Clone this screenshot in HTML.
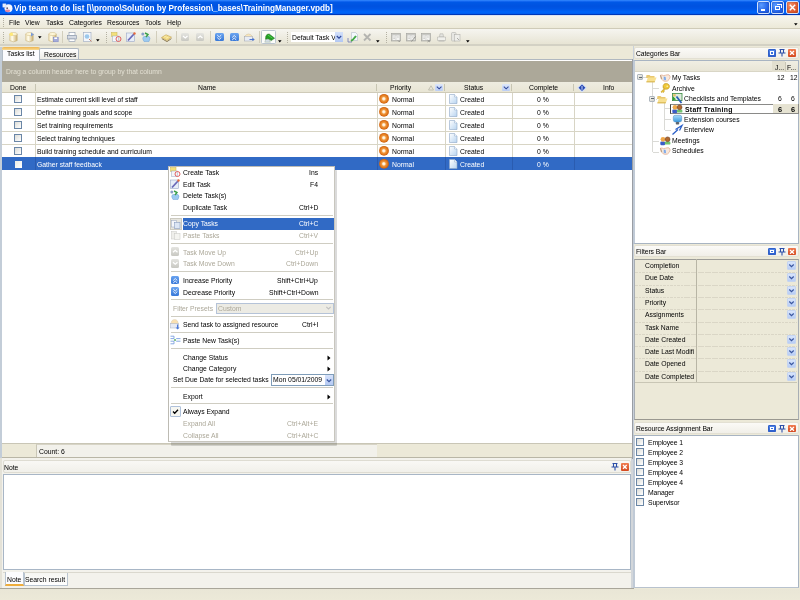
<!DOCTYPE html><html><head><meta charset="utf-8"><style>
*{box-sizing:border-box;margin:0;padding:0}
html,body{width:800px;height:600px;overflow:hidden;background:#ECE9D8;font-family:"Liberation Sans",sans-serif;font-size:6.8px;color:#000}
.a{position:absolute}
.t{position:absolute;will-change:transform;white-space:nowrap;line-height:8px;height:8px}
.g{color:#ACA899}
svg{position:absolute;overflow:visible}
</style></head><body><div class="a" style="left:0px;top:0px;width:800px;height:15px;background:linear-gradient(#3A90FF 0px,#1A6CF4 1px,#0058E6 2.5px,#0052E0 6px,#0056E6 9px,#0066FA 12px,#005EF0 13.5px,#0038B8 14.5px,#0038B8 15px)"></div>
<div class="t" style="left:13.5px;top:5.5px;color:#fff;font-weight:bold;font-size:8.2px;top:3.5px;line-height:10px;height:10px">Vip team to do list [\\promo\Solution by Profession\_bases\TrainingManager.vpdb]</div>
<div class="a" style="left:0px;top:15px;width:800px;height:14px;background:linear-gradient(#F7F6F0,#ECE9D8);border-bottom:1px solid #CFCBB8"></div>
<div class="a" style="left:0px;top:15px;width:800px;height:1px;background:#DCE4F2"></div>
<div class="t" style="left:9px;top:19px;">File</div>
<div class="t" style="left:25px;top:19px;">View</div>
<div class="t" style="left:46px;top:19px;">Tasks</div>
<div class="t" style="left:69px;top:19px;">Categories</div>
<div class="t" style="left:107px;top:19px;">Resources</div>
<div class="t" style="left:145px;top:19px;">Tools</div>
<div class="t" style="left:167px;top:19px;">Help</div>
<div class="a" style="left:0px;top:29px;width:800px;height:15.5px;background:linear-gradient(#F6F5F0,#E6E3D2)"></div>
<div class="a" style="left:0px;top:44.2px;width:800px;height:2.3px;background:#D3D1C4"></div>
<div class="a" style="left:0px;top:59px;width:634px;height:400px;background:#fff;border:1px solid #A5ACB5;border-top:none"></div>
<div class="a" style="left:39px;top:59px;width:594px;height:1px;background:#B0B8C0"></div>
<div class="a" style="left:1px;top:60px;width:632px;height:1.5px;background:#FFFFFF"></div>
<div class="a" style="left:2px;top:47px;width:37.5px;height:13.5px;background:#FCFCFE;border:1px solid #B5BEC8;border-bottom:none;border-top:none;border-radius:2px 2px 0 0"></div>
<div class="a" style="left:2px;top:47px;width:37.5px;height:2.5px;background:linear-gradient(#EDB450,#FADB90);border-radius:2px 2px 0 0"></div>
<div class="t" style="left:7px;top:50px;">Tasks list</div>
<div class="a" style="left:39.2px;top:48.3px;width:40.2px;height:11px;background:linear-gradient(#FFFFFF,#ECEBE5);border:1px solid #B0B9C3;border-bottom:none;border-radius:2px 2px 0 0"></div>
<div class="t" style="left:44px;top:51px;">Resources</div>
<div class="a" style="left:1px;top:61px;width:632px;height:21px;background:#ACA899"></div>
<div class="t" style="left:6px;top:68px;color:#E2DFD2">Drag a column header here to group by that column</div>
<div class="a" style="left:1px;top:82px;width:632px;height:11px;background:linear-gradient(#EEECE0,#E8E5D4);border-bottom:1px solid #CFCBB9"></div>
<div class="t" style="left:10px;top:84px;color:#000">Done</div>
<div class="t" style="left:197.5px;top:84px;">Name</div>
<div class="t" style="left:390px;top:84px;">Priority</div>
<div class="t" style="left:464px;top:84px;">Status</div>
<div class="t" style="left:528.5px;top:84px;">Complete</div>
<div class="t" style="left:602.5px;top:84px;">Info</div>
<div class="a" style="left:35px;top:84px;width:1px;height:7px;background:#C7C5B2"></div>
<div class="a" style="left:376px;top:84px;width:1px;height:7px;background:#C7C5B2"></div>
<div class="a" style="left:444px;top:84px;width:1px;height:7px;background:#C7C5B2"></div>
<div class="a" style="left:511px;top:84px;width:1px;height:7px;background:#C7C5B2"></div>
<div class="a" style="left:573px;top:84px;width:1px;height:7px;background:#C7C5B2"></div>
<div class="a" style="left:1px;top:105px;width:631px;height:1px;background:#D8D5C5"></div>
<div class="a" style="left:14px;top:95px;width:8px;height:8px;border:1px solid #6A86A6;background:linear-gradient(135deg,#DCDCD7,#FFFFFF)"></div>
<div class="t" style="left:36.5px;top:96px;">Estimate current skill level of staff</div>
<div class="t" style="left:391.5px;top:96px;">Normal</div>
<div class="t" style="left:459.7px;top:96px;">Created</div>
<div class="t" style="left:536.7px;top:96px;">0 %</div>
<div class="a" style="left:1px;top:118px;width:631px;height:1px;background:#D8D5C5"></div>
<div class="a" style="left:14px;top:108px;width:8px;height:8px;border:1px solid #6A86A6;background:linear-gradient(135deg,#DCDCD7,#FFFFFF)"></div>
<div class="t" style="left:36.5px;top:109px;">Define training goals and scope</div>
<div class="t" style="left:391.5px;top:109px;">Normal</div>
<div class="t" style="left:459.7px;top:109px;">Created</div>
<div class="t" style="left:536.7px;top:109px;">0 %</div>
<div class="a" style="left:1px;top:131px;width:631px;height:1px;background:#D8D5C5"></div>
<div class="a" style="left:14px;top:121px;width:8px;height:8px;border:1px solid #6A86A6;background:linear-gradient(135deg,#DCDCD7,#FFFFFF)"></div>
<div class="t" style="left:36.5px;top:122px;">Set training requirements</div>
<div class="t" style="left:391.5px;top:122px;">Normal</div>
<div class="t" style="left:459.7px;top:122px;">Created</div>
<div class="t" style="left:536.7px;top:122px;">0 %</div>
<div class="a" style="left:1px;top:144px;width:631px;height:1px;background:#D8D5C5"></div>
<div class="a" style="left:14px;top:134px;width:8px;height:8px;border:1px solid #6A86A6;background:linear-gradient(135deg,#DCDCD7,#FFFFFF)"></div>
<div class="t" style="left:36.5px;top:135px;">Select training techniques</div>
<div class="t" style="left:391.5px;top:135px;">Normal</div>
<div class="t" style="left:459.7px;top:135px;">Created</div>
<div class="t" style="left:536.7px;top:135px;">0 %</div>
<div class="a" style="left:1px;top:157px;width:631px;height:1px;background:#D8D5C5"></div>
<div class="a" style="left:14px;top:147px;width:8px;height:8px;border:1px solid #6A86A6;background:linear-gradient(135deg,#DCDCD7,#FFFFFF)"></div>
<div class="t" style="left:36.5px;top:148px;">Build training schedule and curriculum</div>
<div class="t" style="left:391.5px;top:148px;">Normal</div>
<div class="t" style="left:459.7px;top:148px;">Created</div>
<div class="t" style="left:536.7px;top:148px;">0 %</div>
<div class="a" style="left:1px;top:157px;width:631px;height:13px;background:#316AC5"></div>
<div class="a" style="left:14.5px;top:160.5px;width:7px;height:7px;background:linear-gradient(135deg,#ECECE4,#FFFFFF)"></div>
<div class="t" style="left:36.5px;top:161px;color:#fff">Gather staff feedback</div>
<div class="t" style="left:391.5px;top:161px;color:#fff">Normal</div>
<div class="t" style="left:459.7px;top:161px;color:#fff">Created</div>
<div class="t" style="left:536.7px;top:161px;color:#fff">0 %</div>
<div class="a" style="left:35px;top:93px;width:1px;height:64px;background:#D8D5C5"></div>
<div class="a" style="left:35px;top:157px;width:1px;height:13px;background:#2A5CB0"></div>
<div class="a" style="left:377px;top:93px;width:1px;height:64px;background:#D8D5C5"></div>
<div class="a" style="left:377px;top:157px;width:1px;height:13px;background:#2A5CB0"></div>
<div class="a" style="left:445px;top:93px;width:1px;height:64px;background:#D8D5C5"></div>
<div class="a" style="left:445px;top:157px;width:1px;height:13px;background:#2A5CB0"></div>
<div class="a" style="left:512px;top:93px;width:1px;height:64px;background:#D8D5C5"></div>
<div class="a" style="left:512px;top:157px;width:1px;height:13px;background:#2A5CB0"></div>
<div class="a" style="left:574px;top:93px;width:1px;height:64px;background:#D8D5C5"></div>
<div class="a" style="left:574px;top:157px;width:1px;height:13px;background:#2A5CB0"></div>
<div class="a" style="left:1px;top:443px;width:632px;height:15px;background:#ECE9D8;border-top:1px solid #C9C6B6;border-bottom:1px solid #B9B6A6"></div>
<div class="a" style="left:36px;top:444px;width:341px;height:13px;background:#F2F1EB;border-left:1px solid #C9C6B6;border-top:1px solid #D7D4C6"></div>
<div class="t" style="left:38.5px;top:448px;">Count: 6</div>
<div class="a" style="left:0px;top:46.5px;width:1.5px;height:411.5px;background:#C3CDD8"></div>
<div class="a" style="left:0px;top:458px;width:633px;height:130px;background:#F3F2EC"></div>
<div class="a" style="left:0px;top:458px;width:2px;height:130px;background:#E4E2D8"></div>
<div class="a" style="left:2.5px;top:460px;width:628.5px;height:13px;background:linear-gradient(#F9F8F5,#F1F0EA);border:1px solid #DEDCD2;border-radius:2px"></div>
<div class="t" style="left:4px;top:463.5px;">Note</div>
<div class="a" style="left:2.5px;top:473.5px;width:628px;height:96.5px;background:#fff;border:1px solid #A8B6C6"></div>
<div class="a" style="left:2.5px;top:571.5px;width:628.5px;height:1px;background:#DAD8CE"></div>
<div class="a" style="left:631px;top:458px;width:1.5px;height:130px;background:#D2D6DA"></div>
<div class="a" style="left:4.5px;top:572px;width:19px;height:14px;background:#FCFCFE;border:1px solid #B9C4D0;border-top:none;border-bottom:2px solid #EFAD3C"></div>
<div class="t" style="left:6.5px;top:576px;">Note</div>
<div class="a" style="left:23.5px;top:572.5px;width:44px;height:13px;background:linear-gradient(#F6F6F2,#FFFFFF);border:1px solid #B9C4D0;border-top:none"></div>
<div class="t" style="left:24.7px;top:576px;">Search result</div>
<div class="a" style="left:0px;top:587.5px;width:634px;height:1.3px;background:#A9A69A"></div>
<div class="a" style="left:0px;top:588.8px;width:800px;height:11.2px;background:linear-gradient(#E9E6D6,#ECE9D8)"></div>
<div class="a" style="left:632px;top:59px;width:1px;height:400px;background:#9A9EA4"></div>
<div class="a" style="left:633px;top:46px;width:1px;height:542px;background:#C8D0DA"></div>
<div class="a" style="left:634px;top:46.5px;width:165px;height:12px;background:linear-gradient(#FBFAF7,#F1EFE8);border:1px solid #E3E0D3;border-radius:2px"></div>
<div class="t" style="left:636px;top:49.5px;letter-spacing:-0.08px">Categories Bar</div>
<div class="a" style="left:768px;top:49.0px;width:8px;height:7.5px;background:linear-gradient(#5A8FEF,#2456C9);border-radius:1.5px;box-shadow:inset 0 0 0 1px #3160C8"></div>
<div class="a" style="left:770px;top:51.0px;width:4px;height:3.5px;border:1px solid #fff"></div>
<svg style="left:778px;top:49.0px" width="8" height="8" viewBox="0 0 8 8"><path d="M1.5 0.5h5M2.5 0.5v3.5M5.5 0.5v3.5M0.5 4h7M4 4v3.5" stroke="#2C4FA8" stroke-width="1.1" fill="none"/></svg>
<div class="a" style="left:788px;top:49.0px;width:8px;height:7.5px;background:linear-gradient(#F07C50,#D4481E);border-radius:1px"></div>
<svg style="left:788px;top:49.0px" width="8" height="8" viewBox="0 0 8 8"><path d="M2 2L6 5.7M6 2L2 5.7" stroke="#fff" stroke-width="1.3"/></svg>
<div class="a" style="left:633px;top:59.5px;width:166px;height:184.5px;background:#fff;border:1px solid #A8B4C2;border-left:2px solid #C0CAD6"></div>
<div class="a" style="left:635px;top:60.5px;width:163px;height:11.5px;background:linear-gradient(#F0EEE3,#E8E5D6);border-bottom:1px solid #D9D6C6"></div>
<div class="a" style="left:772px;top:60.5px;width:13px;height:11px;background:#E2DFCF"></div>
<div class="a" style="left:784.5px;top:62px;width:1px;height:9px;background:#CAC7B7"></div>
<div class="t" style="left:775px;top:63.5px;">J...</div>
<div class="t" style="left:787px;top:63.5px;">F...</div>
<div class="a" style="left:634px;top:245px;width:165px;height:12px;background:linear-gradient(#FBFAF7,#F1EFE8);border:1px solid #E3E0D3;border-radius:2px"></div>
<div class="t" style="left:636px;top:248px;letter-spacing:-0.08px">Filters Bar</div>
<div class="a" style="left:768px;top:247.5px;width:8px;height:7.5px;background:linear-gradient(#5A8FEF,#2456C9);border-radius:1.5px;box-shadow:inset 0 0 0 1px #3160C8"></div>
<div class="a" style="left:770px;top:249.5px;width:4px;height:3.5px;border:1px solid #fff"></div>
<svg style="left:778px;top:247.5px" width="8" height="8" viewBox="0 0 8 8"><path d="M1.5 0.5h5M2.5 0.5v3.5M5.5 0.5v3.5M0.5 4h7M4 4v3.5" stroke="#2C4FA8" stroke-width="1.1" fill="none"/></svg>
<div class="a" style="left:788px;top:247.5px;width:8px;height:7.5px;background:linear-gradient(#F07C50,#D4481E);border-radius:1px"></div>
<svg style="left:788px;top:247.5px" width="8" height="8" viewBox="0 0 8 8"><path d="M2 2L6 5.7M6 2L2 5.7" stroke="#fff" stroke-width="1.3"/></svg>
<div class="a" style="left:634px;top:258.5px;width:165px;height:161.5px;background:#ECE9D8;border:1px solid #A8AEB4;border-top-color:#9C9C98;border-bottom-color:#9A9890"></div>
<div class="t" style="left:645px;top:262.0px;">Completion</div>
<div class="a" style="left:635px;top:272.3px;width:162px;height:1px;background:repeating-linear-gradient(90deg,#DAD6C6 0 2.5px,transparent 2.5px 3.5px)"></div>
<div class="a" style="left:787px;top:261.0px;width:9px;height:9px;background:linear-gradient(#D8E4FB,#B8CDF5);border:1px solid #C5D4F0;border-radius:1px"></div>
<svg style="left:787px;top:261.0px" width="9" height="9" viewBox="0 0 9 9"><path d="M2.3 3.5L4.5 5.7L6.7 3.5" stroke="#3A56A0" stroke-width="1.2" fill="none"/></svg>
<div class="t" style="left:645px;top:274.3px;">Due Date</div>
<div class="a" style="left:635px;top:284.6px;width:162px;height:1px;background:repeating-linear-gradient(90deg,#DAD6C6 0 2.5px,transparent 2.5px 3.5px)"></div>
<div class="a" style="left:787px;top:273.3px;width:9px;height:9px;background:linear-gradient(#D8E4FB,#B8CDF5);border:1px solid #C5D4F0;border-radius:1px"></div>
<svg style="left:787px;top:273.3px" width="9" height="9" viewBox="0 0 9 9"><path d="M2.3 3.5L4.5 5.7L6.7 3.5" stroke="#3A56A0" stroke-width="1.2" fill="none"/></svg>
<div class="t" style="left:645px;top:286.6px;">Status</div>
<div class="a" style="left:635px;top:296.90000000000003px;width:162px;height:1px;background:repeating-linear-gradient(90deg,#DAD6C6 0 2.5px,transparent 2.5px 3.5px)"></div>
<div class="a" style="left:787px;top:285.6px;width:9px;height:9px;background:linear-gradient(#D8E4FB,#B8CDF5);border:1px solid #C5D4F0;border-radius:1px"></div>
<svg style="left:787px;top:285.6px" width="9" height="9" viewBox="0 0 9 9"><path d="M2.3 3.5L4.5 5.7L6.7 3.5" stroke="#3A56A0" stroke-width="1.2" fill="none"/></svg>
<div class="t" style="left:645px;top:298.9px;">Priority</div>
<div class="a" style="left:635px;top:309.2px;width:162px;height:1px;background:repeating-linear-gradient(90deg,#DAD6C6 0 2.5px,transparent 2.5px 3.5px)"></div>
<div class="a" style="left:787px;top:297.9px;width:9px;height:9px;background:linear-gradient(#D8E4FB,#B8CDF5);border:1px solid #C5D4F0;border-radius:1px"></div>
<svg style="left:787px;top:297.9px" width="9" height="9" viewBox="0 0 9 9"><path d="M2.3 3.5L4.5 5.7L6.7 3.5" stroke="#3A56A0" stroke-width="1.2" fill="none"/></svg>
<div class="t" style="left:645px;top:311.2px;">Assignments</div>
<div class="a" style="left:635px;top:321.5px;width:162px;height:1px;background:repeating-linear-gradient(90deg,#DAD6C6 0 2.5px,transparent 2.5px 3.5px)"></div>
<div class="a" style="left:787px;top:310.2px;width:9px;height:9px;background:linear-gradient(#D8E4FB,#B8CDF5);border:1px solid #C5D4F0;border-radius:1px"></div>
<svg style="left:787px;top:310.2px" width="9" height="9" viewBox="0 0 9 9"><path d="M2.3 3.5L4.5 5.7L6.7 3.5" stroke="#3A56A0" stroke-width="1.2" fill="none"/></svg>
<div class="t" style="left:645px;top:323.5px;">Task Name</div>
<div class="a" style="left:635px;top:333.8px;width:162px;height:1px;background:repeating-linear-gradient(90deg,#DAD6C6 0 2.5px,transparent 2.5px 3.5px)"></div>
<div class="t" style="left:645px;top:335.8px;">Date Created</div>
<div class="a" style="left:635px;top:346.1px;width:162px;height:1px;background:repeating-linear-gradient(90deg,#DAD6C6 0 2.5px,transparent 2.5px 3.5px)"></div>
<div class="a" style="left:787px;top:334.8px;width:9px;height:9px;background:linear-gradient(#D8E4FB,#B8CDF5);border:1px solid #C5D4F0;border-radius:1px"></div>
<svg style="left:787px;top:334.8px" width="9" height="9" viewBox="0 0 9 9"><path d="M2.3 3.5L4.5 5.7L6.7 3.5" stroke="#3A56A0" stroke-width="1.2" fill="none"/></svg>
<div class="t" style="left:645px;top:348.1px;">Date Last Modifi</div>
<div class="a" style="left:635px;top:358.40000000000003px;width:162px;height:1px;background:repeating-linear-gradient(90deg,#DAD6C6 0 2.5px,transparent 2.5px 3.5px)"></div>
<div class="a" style="left:787px;top:347.1px;width:9px;height:9px;background:linear-gradient(#D8E4FB,#B8CDF5);border:1px solid #C5D4F0;border-radius:1px"></div>
<svg style="left:787px;top:347.1px" width="9" height="9" viewBox="0 0 9 9"><path d="M2.3 3.5L4.5 5.7L6.7 3.5" stroke="#3A56A0" stroke-width="1.2" fill="none"/></svg>
<div class="t" style="left:645px;top:360.4px;">Date Opened</div>
<div class="a" style="left:635px;top:370.7px;width:162px;height:1px;background:repeating-linear-gradient(90deg,#DAD6C6 0 2.5px,transparent 2.5px 3.5px)"></div>
<div class="a" style="left:787px;top:359.4px;width:9px;height:9px;background:linear-gradient(#D8E4FB,#B8CDF5);border:1px solid #C5D4F0;border-radius:1px"></div>
<svg style="left:787px;top:359.4px" width="9" height="9" viewBox="0 0 9 9"><path d="M2.3 3.5L4.5 5.7L6.7 3.5" stroke="#3A56A0" stroke-width="1.2" fill="none"/></svg>
<div class="t" style="left:645px;top:372.7px;">Date Completed</div>
<div class="a" style="left:787px;top:371.7px;width:9px;height:9px;background:linear-gradient(#D8E4FB,#B8CDF5);border:1px solid #C5D4F0;border-radius:1px"></div>
<svg style="left:787px;top:371.7px" width="9" height="9" viewBox="0 0 9 9"><path d="M2.3 3.5L4.5 5.7L6.7 3.5" stroke="#3A56A0" stroke-width="1.2" fill="none"/></svg>
<div class="a" style="left:696px;top:259px;width:1px;height:123px;background:#B8B5A5"></div>
<div class="a" style="left:635px;top:382px;width:162px;height:1px;background:#C9C6B5"></div>
<div class="a" style="left:634px;top:422px;width:165px;height:12px;background:linear-gradient(#FBFAF7,#F1EFE8);border:1px solid #E3E0D3;border-radius:2px"></div>
<div class="t" style="left:636px;top:425px;letter-spacing:-0.08px">Resource Assignment Bar</div>
<div class="a" style="left:768px;top:424.5px;width:8px;height:7.5px;background:linear-gradient(#5A8FEF,#2456C9);border-radius:1.5px;box-shadow:inset 0 0 0 1px #3160C8"></div>
<div class="a" style="left:770px;top:426.5px;width:4px;height:3.5px;border:1px solid #fff"></div>
<svg style="left:778px;top:424.5px" width="8" height="8" viewBox="0 0 8 8"><path d="M1.5 0.5h5M2.5 0.5v3.5M5.5 0.5v3.5M0.5 4h7M4 4v3.5" stroke="#2C4FA8" stroke-width="1.1" fill="none"/></svg>
<div class="a" style="left:788px;top:424.5px;width:8px;height:7.5px;background:linear-gradient(#F07C50,#D4481E);border-radius:1px"></div>
<svg style="left:788px;top:424.5px" width="8" height="8" viewBox="0 0 8 8"><path d="M2 2L6 5.7M6 2L2 5.7" stroke="#fff" stroke-width="1.3"/></svg>
<div class="a" style="left:633px;top:435px;width:166px;height:152.5px;background:#fff;border:1px solid #A8B4C2;border-left:2px solid #C0CAD6;border-bottom:1.5px solid #B8C2CE"></div>
<div class="a" style="left:636.2px;top:438px;width:7.8px;height:7.8px;border:1px solid #6A86A6;background:linear-gradient(135deg,#DCDCD7,#FFFFFF)"></div>
<div class="t" style="left:648px;top:438.5px;letter-spacing:-0.1px">Employee 1</div>
<div class="a" style="left:636.2px;top:448px;width:7.8px;height:7.8px;border:1px solid #6A86A6;background:linear-gradient(135deg,#DCDCD7,#FFFFFF)"></div>
<div class="t" style="left:648px;top:448.5px;letter-spacing:-0.1px">Employee 2</div>
<div class="a" style="left:636.2px;top:458px;width:7.8px;height:7.8px;border:1px solid #6A86A6;background:linear-gradient(135deg,#DCDCD7,#FFFFFF)"></div>
<div class="t" style="left:648px;top:458.5px;letter-spacing:-0.1px">Employee 3</div>
<div class="a" style="left:636.2px;top:468px;width:7.8px;height:7.8px;border:1px solid #6A86A6;background:linear-gradient(135deg,#DCDCD7,#FFFFFF)"></div>
<div class="t" style="left:648px;top:468.5px;letter-spacing:-0.1px">Employee 4</div>
<div class="a" style="left:636.2px;top:478px;width:7.8px;height:7.8px;border:1px solid #6A86A6;background:linear-gradient(135deg,#DCDCD7,#FFFFFF)"></div>
<div class="t" style="left:648px;top:478.5px;letter-spacing:-0.1px">Employee 4</div>
<div class="a" style="left:636.2px;top:488px;width:7.8px;height:7.8px;border:1px solid #6A86A6;background:linear-gradient(135deg,#DCDCD7,#FFFFFF)"></div>
<div class="t" style="left:648px;top:488.5px;letter-spacing:-0.1px">Manager</div>
<div class="a" style="left:636.2px;top:498px;width:7.8px;height:7.8px;border:1px solid #6A86A6;background:linear-gradient(135deg,#DCDCD7,#FFFFFF)"></div>
<div class="t" style="left:648px;top:498.5px;letter-spacing:-0.1px">Supervisor</div>
<div class="a" style="left:171px;top:169.5px;width:166px;height:276px;background:rgba(0,0,0,0.14);border-radius:1px"></div>
<div class="a" style="left:168px;top:165.5px;width:166.5px;height:276px;background:#FFFFFF;border:1px solid #BDBBB3;border-right-color:#C8C6BE;border-bottom-color:#C8C6BE"></div>
<div class="a" style="left:170.5px;top:215px;width:162.5px;height:1px;background:#CFCDC2"></div>
<div class="a" style="left:170.5px;top:243px;width:162.5px;height:1px;background:#CFCDC2"></div>
<div class="a" style="left:170.5px;top:271px;width:162.5px;height:1px;background:#CFCDC2"></div>
<div class="a" style="left:170.5px;top:299px;width:162.5px;height:1px;background:#CFCDC2"></div>
<div class="a" style="left:170.5px;top:316px;width:162.5px;height:1px;background:#CFCDC2"></div>
<div class="a" style="left:170.5px;top:332px;width:162.5px;height:1px;background:#CFCDC2"></div>
<div class="a" style="left:170.5px;top:348px;width:162.5px;height:1px;background:#CFCDC2"></div>
<div class="a" style="left:170.5px;top:387px;width:162.5px;height:1px;background:#CFCDC2"></div>
<div class="a" style="left:170.5px;top:403px;width:162.5px;height:1px;background:#CFCDC2"></div>
<div class="t" style="left:183px;top:169px;">Create Task</div>
<div class="t" style="right:482px;top:169px;">Ins</div>
<div class="t" style="left:183px;top:180.5px;">Edit Task</div>
<div class="t" style="right:482px;top:180.5px;">F4</div>
<div class="t" style="left:183px;top:192px;">Delete Task(s)</div>
<div class="t" style="left:183px;top:204px;">Duplicate Task</div>
<div class="t" style="right:482px;top:204px;">Ctrl+D</div>
<div class="a" style="left:182.5px;top:218px;width:151px;height:11.5px;background:#316AC5"></div>
<div class="t" style="left:183px;top:220px;color:#fff">Copy Tasks</div>
<div class="t" style="right:482px;top:220px;color:#fff">Ctrl+C</div>
<div class="t" style="left:183px;top:232px;color:#ACA899">Paste Tasks</div>
<div class="t" style="right:482px;top:232px;color:#ACA899">Ctrl+V</div>
<div class="t" style="left:183px;top:248.5px;color:#ACA899">Task Move Up</div>
<div class="t" style="right:482px;top:248.5px;color:#ACA899">Ctrl+Up</div>
<div class="t" style="left:183px;top:260px;color:#ACA899">Task Move Down</div>
<div class="t" style="right:482px;top:260px;color:#ACA899">Ctrl+Down</div>
<div class="t" style="left:183px;top:277px;">Increase Priority</div>
<div class="t" style="right:482px;top:277px;">Shift+Ctrl+Up</div>
<div class="t" style="left:183px;top:288.5px;">Decrease Priority</div>
<div class="t" style="right:482px;top:288.5px;">Shift+Ctrl+Down</div>
<div class="t" style="left:183px;top:321px;">Send task to assigned resource</div>
<div class="t" style="right:482px;top:321px;">Ctrl+I</div>
<div class="t" style="left:183px;top:337px;">Paste New Task(s)</div>
<div class="t" style="left:183px;top:353.5px;">Change Status</div>
<div class="t" style="left:183px;top:364.5px;">Change Category</div>
<div class="t" style="left:183px;top:392.5px;">Export</div>
<div class="t" style="left:183px;top:408px;">Always Expand</div>
<div class="t" style="left:183px;top:419.5px;color:#ACA899">Expand All</div>
<div class="t" style="right:482px;top:419.5px;color:#ACA899">Ctrl+Alt+E</div>
<div class="t" style="left:183px;top:431.5px;color:#ACA899">Collapse All</div>
<div class="t" style="right:482px;top:431.5px;color:#ACA899">Ctrl+Alt+C</div>
<div class="t" style="left:173px;top:305px;color:#ACA899">Filter Presets</div>
<div class="a" style="left:215.5px;top:302.5px;width:118px;height:11px;background:#ECEBE4;border:1px solid #B5C3D8"></div>
<div class="t" style="left:218px;top:305px;color:#ACA899">Custom</div>
<svg style="left:324px;top:304px" width="9" height="8" viewBox="0 0 9 8"><path d="M2.3 2.8L4.5 5L6.7 2.8" stroke="#C0C0C0" stroke-width="1.1" fill="none"/></svg>
<div class="t" style="left:172.5px;top:375.5px;">Set Due Date for selected tasks</div>
<div class="a" style="left:271px;top:374px;width:62.5px;height:11.5px;background:#fff;border:1px solid #7F9DB9"></div>
<div class="t" style="left:273px;top:375.7px;">Mon 05/01/2009</div>
<div class="a" style="left:324.5px;top:375px;width:8px;height:9.5px;background:linear-gradient(#D6E2FA,#B4C9F3)"></div>
<svg style="left:324.5px;top:375.5px" width="8" height="9" viewBox="0 0 8 9"><path d="M1.8 3.5L4 5.7L6.2 3.5" stroke="#3A56A0" stroke-width="1.2" fill="none"/></svg>
<svg style="left:327px;top:354.7px" width="4" height="6" viewBox="0 0 4 6"><path d="M0.5 0.5L3.5 3L0.5 5.5Z" fill="#000"/></svg>
<svg style="left:327px;top:365.8px" width="4" height="6" viewBox="0 0 4 6"><path d="M0.5 0.5L3.5 3L0.5 5.5Z" fill="#000"/></svg>
<svg style="left:327px;top:393.5px" width="4" height="6" viewBox="0 0 4 6"><path d="M0.5 0.5L3.5 3L0.5 5.5Z" fill="#000"/></svg>
<div class="a" style="left:170px;top:406px;width:11px;height:11px;background:#F6F6F1;border:1px solid #AFC1DA;border-radius:1px"></div>
<svg style="left:170px;top:406px" width="11" height="11" viewBox="0 0 11 11"><path d="M3 5.5L4.7 7.2L8 3.8" stroke="#000" stroke-width="1.3" fill="none"/></svg>
<div class="a" style="left:170px;top:218px;width:12px;height:11.5px;background:#E6E5DE;border:1px solid #CCCAC0"></div>
<div class="a" style="left:652px;top:81px;width:1px;height:71px;background:#DADAD6"></div>
<div class="a" style="left:664px;top:103px;width:1px;height:27px;background:#DADAD6"></div>
<div class="a" style="left:653px;top:87.5px;width:6px;height:1px;background:#DADAD6"></div>
<div class="a" style="left:653px;top:141px;width:6px;height:1px;background:#DADAD6"></div>
<div class="a" style="left:653px;top:151.5px;width:6px;height:1px;background:#DADAD6"></div>
<div class="a" style="left:665px;top:108.3px;width:6px;height:1px;background:#DADAD6"></div>
<div class="a" style="left:665px;top:119.3px;width:6px;height:1px;background:#DADAD6"></div>
<div class="a" style="left:665px;top:129.7px;width:6px;height:1px;background:#DADAD6"></div>
<div class="a" style="left:643px;top:77px;width:3px;height:1px;background:#DADAD6"></div>
<div class="a" style="left:656px;top:98.5px;width:1px;height:1px;background:#DADAD6"></div>
<div class="a" style="left:637.3px;top:74.2px;width:6px;height:6px;background:linear-gradient(135deg,#F4F4F0,#D0D0C8);border:1px solid #AEB6BE;border-radius:1px"></div>
<div class="a" style="left:638.8px;top:76.7px;width:3px;height:1px;background:#606870"></div>
<div class="a" style="left:649.3px;top:95.8px;width:6px;height:6px;background:linear-gradient(135deg,#F4F4F0,#D0D0C8);border:1px solid #AEB6BE;border-radius:1px"></div>
<div class="a" style="left:650.8px;top:98.3px;width:3px;height:1px;background:#606870"></div>
<svg style="left:646.3px;top:73.8px" width="11" height="9" viewBox="0 0 11 9"><path d="M0.5 1h3l1 1h4v2h-8.5z" fill="#E9C870"/><path d="M1.8 3.5h8.8l-2 4.8h-8.3z" fill="#F8E090"/><path d="M0.3 8.3h8.4l0.3-0.8h-8.5z" fill="#C8A030"/></svg>
<svg style="left:657px;top:95.3px" width="11" height="9" viewBox="0 0 11 9"><path d="M0.5 1h3l1 1h4v2h-8.5z" fill="#E9C870"/><path d="M1.8 3.5h8.8l-2 4.8h-8.3z" fill="#F8E090"/><path d="M0.3 8.3h8.4l0.3-0.8h-8.5z" fill="#C8A030"/></svg>
<svg style="left:659.5px;top:73.5px" width="11" height="8" viewBox="0 0 11 8"><path d="M0.4 1.2Q2 0.6 3.5 1.6Q6 1.2 7 0.8Q9.5 0.2 10 2.2Q10.4 4 9 5.6L7.5 7Q5 7.8 3.2 6.8L1.2 4.8Z" fill="#F8E8DC" stroke="#E0A888" stroke-width="0.7"/><path d="M0.5 1.3L1.8 5" stroke="#A89070" stroke-width="0.8"/><path d="M3.6 2.5Q5 2 6 3.5L6 6.2Q4.5 6.6 3.6 5.8Z" fill="#9CC0F0"/><path d="M4.6 3L5.2 6" stroke="#5A8AD8" stroke-width="0.6"/></svg>
<div class="t" style="left:672px;top:74px;">My Tasks</div>
<div class="t" style="left:777px;top:74px;">12</div>
<div class="t" style="left:790px;top:74px;">12</div>
<svg style="left:660px;top:83px" width="10" height="10" viewBox="0 0 10 10"><path d="M6.8 0.6a2.8 2.8 0 1 1 -2.3 4.6L1 8.8 2 9.6 2.8 8.8 3.6 9.4 4.2 8.6 3.6 8 5.2 6.4A2.8 2.8 0 0 1 6.8 0.6z" fill="#F0C83A" stroke="#B8901A" stroke-width="0.6"/><circle cx="7.2" cy="3.2" r="0.8" fill="#FFF4B0"/></svg>
<div class="t" style="left:672px;top:84.6px;">Archive</div>
<svg style="left:672px;top:93px" width="11" height="11" viewBox="0 0 11 11"><rect x="0.4" y="0.4" width="9.6" height="7.2" fill="#DDEBDD" stroke="#3A8A40" stroke-width="0.8"/><path d="M0.8 7.2V3L4 6.5Z" fill="#2FA030"/><rect x="1.2" y="1.2" width="2.5" height="2.2" fill="#E8C060"/><path d="M4.5 3.5L9.5 10" stroke="#2A60B8" stroke-width="1.8"/></svg>
<div class="t" style="left:684px;top:95px;">Checklists and Templates</div>
<div class="t" style="left:778px;top:95px;">6</div>
<div class="t" style="left:791px;top:95px;">6</div>
<div class="a" style="left:670px;top:103.7px;width:129px;height:10.5px;background:#fff;border:1px solid #8A8A88;border-left-color:#444"></div>
<div class="a" style="left:773px;top:104px;width:25px;height:9px;background:#E6E3D2"></div>
<svg style="left:672px;top:104px" width="11" height="10" viewBox="0 0 11 10"><rect x="0.3" y="5.6" width="4.8" height="3.6" rx="1.2" fill="#3A5CC8"/><rect x="4.8" y="5.6" width="5.6" height="3" rx="1.2" fill="#72C470"/><circle cx="3" cy="3.3" r="2.4" fill="#EFA84A"/><circle cx="7.6" cy="3.3" r="2.4" fill="#B06830" stroke="#5A2A10" stroke-width="0.5"/></svg>
<div class="t" style="left:685px;top:105.5px;font-weight:bold;letter-spacing:0.3px">Staff Training</div>
<div class="t" style="left:778px;top:105.5px;font-weight:bold;font-size:7.4px">6</div>
<div class="t" style="left:791px;top:105.5px;font-weight:bold;font-size:7.4px">6</div>
<svg style="left:673px;top:115px" width="9" height="10" viewBox="0 0 9 10"><defs><linearGradient id="mg" x1="0" y1="0" x2="0" y2="1"><stop offset="0" stop-color="#A8DCFA"/><stop offset="1" stop-color="#3A9AE0"/></linearGradient></defs><rect x="0.3" y="0.3" width="8.4" height="6.6" rx="1.8" fill="url(#mg)" stroke="#4A88C0" stroke-width="0.5"/><rect x="2.8" y="7" width="3.4" height="2.6" rx="0.8" fill="#5A6470"/></svg>
<div class="t" style="left:683.75px;top:115.8px;">Extension courses</div>
<svg style="left:672px;top:125px" width="11" height="10" viewBox="0 0 11 10"><path d="M0.5 9.5L6 4.5M3.5 4.5L10 0.5L7.5 5.5" stroke="#2A5FC8" stroke-width="1.3" fill="none"/></svg>
<div class="t" style="left:683.75px;top:126.3px;">Enterview</div>
<svg style="left:660px;top:135.5px" width="11" height="10" viewBox="0 0 11 10"><rect x="0.3" y="5.6" width="4.8" height="3.6" rx="1.2" fill="#3A5CC8"/><rect x="4.8" y="5.6" width="5.6" height="3" rx="1.2" fill="#72C470"/><circle cx="3" cy="3.3" r="2.4" fill="#EFA84A"/><circle cx="7.6" cy="3.3" r="2.4" fill="#B06830" stroke="#5A2A10" stroke-width="0.5"/></svg>
<div class="t" style="left:672px;top:136.8px;">Meetings</div>
<svg style="left:659.5px;top:146.8px" width="11" height="8" viewBox="0 0 11 8"><path d="M0.4 1.2Q2 0.6 3.5 1.6Q6 1.2 7 0.8Q9.5 0.2 10 2.2Q10.4 4 9 5.6L7.5 7Q5 7.8 3.2 6.8L1.2 4.8Z" fill="#F8E8DC" stroke="#E0A888" stroke-width="0.7"/><path d="M0.5 1.3L1.8 5" stroke="#A89070" stroke-width="0.8"/><path d="M3.6 2.5Q5 2 6 3.5L6 6.2Q4.5 6.6 3.6 5.8Z" fill="#9CC0F0"/><path d="M4.6 3L5.2 6" stroke="#5A8AD8" stroke-width="0.6"/></svg>
<div class="t" style="left:672px;top:147.3px;">Schedules</div>
<div class="a" style="left:3px;top:18px;width:1px;height:1px;background:#B4B1A2"></div>
<div class="a" style="left:3px;top:20px;width:1px;height:1px;background:#B4B1A2"></div>
<div class="a" style="left:3px;top:22px;width:1px;height:1px;background:#B4B1A2"></div>
<div class="a" style="left:3px;top:24px;width:1px;height:1px;background:#B4B1A2"></div>
<div class="a" style="left:3px;top:26px;width:1px;height:1px;background:#B4B1A2"></div>
<div class="a" style="left:3px;top:32px;width:1px;height:1px;background:#B4B1A2"></div>
<div class="a" style="left:3px;top:34px;width:1px;height:1px;background:#B4B1A2"></div>
<div class="a" style="left:3px;top:36px;width:1px;height:1px;background:#B4B1A2"></div>
<div class="a" style="left:3px;top:38px;width:1px;height:1px;background:#B4B1A2"></div>
<div class="a" style="left:3px;top:40px;width:1px;height:1px;background:#B4B1A2"></div>
<div class="a" style="left:3px;top:42px;width:1px;height:1px;background:#B4B1A2"></div>
<div class="a" style="left:105.5px;top:32px;width:1px;height:1px;background:#B4B1A2"></div>
<div class="a" style="left:105.5px;top:34px;width:1px;height:1px;background:#B4B1A2"></div>
<div class="a" style="left:105.5px;top:36px;width:1px;height:1px;background:#B4B1A2"></div>
<div class="a" style="left:105.5px;top:38px;width:1px;height:1px;background:#B4B1A2"></div>
<div class="a" style="left:105.5px;top:40px;width:1px;height:1px;background:#B4B1A2"></div>
<div class="a" style="left:105.5px;top:42px;width:1px;height:1px;background:#B4B1A2"></div>
<div class="a" style="left:287px;top:32px;width:1px;height:1px;background:#B4B1A2"></div>
<div class="a" style="left:287px;top:34px;width:1px;height:1px;background:#B4B1A2"></div>
<div class="a" style="left:287px;top:36px;width:1px;height:1px;background:#B4B1A2"></div>
<div class="a" style="left:287px;top:38px;width:1px;height:1px;background:#B4B1A2"></div>
<div class="a" style="left:287px;top:40px;width:1px;height:1px;background:#B4B1A2"></div>
<div class="a" style="left:287px;top:42px;width:1px;height:1px;background:#B4B1A2"></div>
<div class="a" style="left:385.5px;top:32px;width:1px;height:1px;background:#B4B1A2"></div>
<div class="a" style="left:385.5px;top:34px;width:1px;height:1px;background:#B4B1A2"></div>
<div class="a" style="left:385.5px;top:36px;width:1px;height:1px;background:#B4B1A2"></div>
<div class="a" style="left:385.5px;top:38px;width:1px;height:1px;background:#B4B1A2"></div>
<div class="a" style="left:385.5px;top:40px;width:1px;height:1px;background:#B4B1A2"></div>
<div class="a" style="left:385.5px;top:42px;width:1px;height:1px;background:#B4B1A2"></div>
<div class="a" style="left:62px;top:31px;width:1px;height:12px;background:#D2CEBC"></div>
<div class="a" style="left:155.5px;top:31px;width:1px;height:12px;background:#D2CEBC"></div>
<div class="a" style="left:175.5px;top:31px;width:1px;height:12px;background:#D2CEBC"></div>
<div class="a" style="left:209.5px;top:31px;width:1px;height:12px;background:#D2CEBC"></div>
<div class="a" style="left:258.5px;top:31px;width:1px;height:12px;background:#D2CEBC"></div>
<svg style="left:38px;top:35.5px" width="4" height="3" viewBox="0 0 4 3"><path d="M0 0.3h3.6L1.8 2.6z" fill="#000"/></svg>
<svg style="left:96px;top:39px" width="4" height="3" viewBox="0 0 4 3"><path d="M0 0.3h3.6L1.8 2.6z" fill="#000"/></svg>
<svg style="left:278px;top:39.5px" width="4" height="3" viewBox="0 0 4 3"><path d="M0 0.3h3.6L1.8 2.6z" fill="#000"/></svg>
<svg style="left:376px;top:39.5px" width="4" height="3" viewBox="0 0 4 3"><path d="M0 0.3h3.6L1.8 2.6z" fill="#000"/></svg>
<svg style="left:465.5px;top:39.5px" width="4" height="3" viewBox="0 0 4 3"><path d="M0 0.3h3.6L1.8 2.6z" fill="#000"/></svg>
<svg style="left:793.5px;top:22.5px" width="4" height="3" viewBox="0 0 4 3"><path d="M0 0.3h3.6L1.8 2.6z" fill="#000"/></svg>
<svg style="left:8.5px;top:31.5px" width="10" height="10" viewBox="0 0 10 10"><defs><linearGradient id="cylg" x1="0" y1="0" x2="1" y2="0"><stop offset="0" stop-color="#F4E8C0"/><stop offset="0.35" stop-color="#FFFBEA"/><stop offset="1" stop-color="#C9AE6E"/></linearGradient></defs><path d="M0.8 2v6.6q3.7 2.4 7.4 0V2z" fill="url(#cylg)" stroke="#BFA66A" stroke-width="0.5"/><ellipse cx="4.5" cy="2" rx="3.7" ry="1.5" fill="#FFF8DA" stroke="#C9B27A" stroke-width="0.5"/><circle cx="2.3" cy="2.3" r="1.8" fill="#FFE870" opacity="0.9"/></svg>
<svg style="left:25px;top:31.5px" width="10" height="10" viewBox="0 0 10 10"><defs><linearGradient id="cylg" x1="0" y1="0" x2="1" y2="0"><stop offset="0" stop-color="#F4E8C0"/><stop offset="0.35" stop-color="#FFFBEA"/><stop offset="1" stop-color="#C9AE6E"/></linearGradient></defs><path d="M0.8 2v6.6q3.7 2.4 7.4 0V2z" fill="url(#cylg)" stroke="#BFA66A" stroke-width="0.5"/><ellipse cx="4.5" cy="2" rx="3.7" ry="1.5" fill="#FFF8DA" stroke="#C9B27A" stroke-width="0.5"/><path d="M6 0.5l3 2-3 2" fill="#7A9AD8"/></svg>
<svg style="left:48px;top:31.5px" width="11" height="10" viewBox="0 0 11 10"><defs><linearGradient id="cylg" x1="0" y1="0" x2="1" y2="0"><stop offset="0" stop-color="#F4E8C0"/><stop offset="0.35" stop-color="#FFFBEA"/><stop offset="1" stop-color="#C9AE6E"/></linearGradient></defs><path d="M0.8 2v6.6q3.7 2.4 7.4 0V2z" fill="url(#cylg)" stroke="#BFA66A" stroke-width="0.5"/><ellipse cx="4.5" cy="2" rx="3.7" ry="1.5" fill="#FFF8DA" stroke="#C9B27A" stroke-width="0.5"/><rect x="5.2" y="5.2" width="5" height="4.6" fill="#A4ACDC" stroke="#7A84C0" stroke-width="0.5"/><rect x="6.3" y="5.4" width="2.8" height="1.6" fill="#fff"/></svg>
<svg style="left:67px;top:32px" width="10" height="10" viewBox="0 0 10 10"><rect x="2" y="0.5" width="6" height="3" fill="#fff" stroke="#8894A8" stroke-width="0.6"/><rect x="0.5" y="3.5" width="9" height="3.5" fill="#D5DAE3" stroke="#8894A8" stroke-width="0.6"/><rect x="2" y="7" width="6" height="2.5" fill="#fff" stroke="#8894A8" stroke-width="0.6"/></svg>
<svg style="left:83px;top:32px" width="9" height="10" viewBox="0 0 9 10"><rect x="0.5" y="0.5" width="7.5" height="9" fill="#F3F6FB" stroke="#9AA8C0" stroke-width="0.6"/><circle cx="4" cy="4.5" r="2.3" fill="#9CC8EC"/><path d="M6 7l2.5 2.5" stroke="#C8846A" stroke-width="1"/></svg>
<svg style="left:111px;top:32px" width="11" height="10" viewBox="0 0 11 10"><rect x="0.5" y="0.5" width="5.5" height="4" fill="#F3E07A" stroke="#C8B450" stroke-width="0.5"/><rect x="1.5" y="4" width="6" height="5.5" fill="#F4F6FA" stroke="#9AA8C0" stroke-width="0.5"/><circle cx="7.5" cy="7" r="2.5" fill="none" stroke="#E05050" stroke-width="0.9"/></svg>
<svg style="left:126px;top:32px" width="10" height="10" viewBox="0 0 10 10"><rect x="0.5" y="1" width="8" height="8.5" fill="#E8EEF8" stroke="#9AA8C8" stroke-width="0.6"/><path d="M2 8.5L8 2" stroke="#6A6AB8" stroke-width="1.8"/><circle cx="8.5" cy="1.5" r="1.2" fill="#E86A3A"/></svg>
<svg style="left:141px;top:32px" width="10" height="10" viewBox="0 0 10 10"><path d="M3 9.5q-2.5-4 0-5h5q2 1 0 5z" fill="#9CCAF0" stroke="#6AA0D8" stroke-width="0.5"/><path d="M4 1l3 1.5-2 2.5" stroke="#38A048" stroke-width="1.4" fill="none"/><circle cx="1.8" cy="2" r="1.5" fill="#8AA0C8"/></svg>
<svg style="left:160.5px;top:33.5px" width="11" height="8" viewBox="0 0 11 8"><path d="M0.8 4.6L6 7.6 10.4 4.6" stroke="#8C7C58" stroke-width="1" fill="none"/><path d="M0.5 3.5L5 0.8 10.5 3.2 6 6.5z" fill="#F2DC88" stroke="#C0A050" stroke-width="0.6"/><path d="M3 3l2.5-1.2M5 4.2l2.5-1.2" stroke="#FFF6C8" stroke-width="0.6"/></svg>
<div class="a" style="left:180.5px;top:33px;width:8.5px;height:8px;background:linear-gradient(#E4E4E0,#C8C8C2);border-radius:1.5px"></div>
<svg style="left:180.5px;top:33px" width="9" height="8" viewBox="0 0 9 8"><path d="M2 3L4.25 5 6.5 3" stroke="#fff" stroke-width="1.2" fill="none"/></svg>
<div class="a" style="left:195.5px;top:33px;width:8.5px;height:8px;background:linear-gradient(#E4E4E0,#C8C8C2);border-radius:1.5px"></div>
<svg style="left:195.5px;top:33px" width="9" height="8" viewBox="0 0 9 8"><path d="M2 5L4.25 3 6.5 5" stroke="#fff" stroke-width="1.2" fill="none"/></svg>
<div class="a" style="left:215px;top:32.5px;width:8.5px;height:8.5px;background:linear-gradient(#6AA4F0,#3878D8);border-radius:1.5px"></div>
<svg style="left:215px;top:32.5px" width="9" height="9" viewBox="0 0 9 9"><path d="M2.2 2L4.25 4 6.3 2M2.2 4.5L4.25 6.5 6.3 4.5" stroke="#fff" stroke-width="0.9" fill="none"/></svg>
<div class="a" style="left:230px;top:32.5px;width:8.5px;height:8.5px;background:linear-gradient(#6AA4F0,#3878D8);border-radius:1.5px"></div>
<svg style="left:230px;top:32.5px" width="9" height="9" viewBox="0 0 9 9"><path d="M2.2 4.5L4.25 2.5 6.3 4.5M2.2 7L4.25 5 6.3 7" stroke="#fff" stroke-width="0.9" fill="none"/></svg>
<svg style="left:244px;top:32px" width="11" height="10" viewBox="0 0 11 10"><path d="M0.5 4.5q4-5 8 0v4h-8z" fill="#FBE6B8" stroke="#C8B898" stroke-width="0.5"/><rect x="0.5" y="4.5" width="8" height="4.5" fill="#E8ECF4" stroke="#A0A8B8" stroke-width="0.5"/><path d="M5.5 7.5h4.5M8.5 6l1.5 1.5-1.5 1.5" stroke="#3A6AD0" stroke-width="0.9" fill="none"/></svg>
<div class="a" style="left:261px;top:30px;width:14.5px;height:13.5px;background:#FCFCFA;border:1px solid #BCC6D0;border-radius:1.5px"></div>
<svg style="left:263.5px;top:32.5px" width="11" height="10" viewBox="0 0 11 10"><path d="M0.8 9.2L2.8 3.2L6.5 9.2Z" fill="#D4DEE8" stroke="#9AB09A" stroke-width="0.5"/><path d="M1.8 3.2Q2.8 0.6 5.2 1L10.6 5.2L7.2 7.6Q4.5 4.6 1.6 6.2Z" fill="#22A022" stroke="#2F7A2F" stroke-width="0.6"/><path d="M4 2.2L8.5 5.2" stroke="#5AD05A" stroke-width="0.8"/></svg>
<div class="a" style="left:291px;top:32px;width:52px;height:10px;background:#fff"></div>
<div class="t" style="left:292px;top:33.5px;">Default Task V</div>
<div class="a" style="left:335px;top:32px;width:8px;height:10px;background:linear-gradient(#D3E0FA,#B2C8F4)"></div>
<svg style="left:335px;top:32px" width="8" height="10" viewBox="0 0 8 10"><path d="M1.8 4L4 6.2 6.2 4" stroke="#30489A" stroke-width="1.2" fill="none"/></svg>
<svg style="left:346.5px;top:32px" width="11" height="11" viewBox="0 0 11 11"><path d="M4.5 0.5h4l2 2v6h-6z" fill="#F4F8FC" stroke="#A8B0C0" stroke-width="0.5"/><path d="M4 9q2-1 5-5" stroke="#44A844" stroke-width="2" fill="none"/><path d="M1 6v4h4" stroke="#7A84B8" stroke-width="0.9" fill="none"/></svg>
<svg style="left:363px;top:33px" width="8.5" height="8.5" viewBox="0 0 8.5 8.5"><path d="M1 1L7.5 7.5M7.5 1L1 7.5" stroke="#B4B4B0" stroke-width="1.8"/></svg>
<svg style="left:391px;top:33px" width="11" height="10" viewBox="0 0 11 10"><rect x="0.5" y="0.5" width="9" height="7.5" fill="#C8C8C4" stroke="#A0A09C" stroke-width="0.6"/><rect x="1.6" y="2.4" width="3" height="4.6" fill="#F4F4F2"/><rect x="5.3" y="2.4" width="3.2" height="4.6" fill="#F4F4F2"/><path d="M2.3 4h1.6M2.3 5.5h1.6M6 4h1.8" stroke="#A8A8A4" stroke-width="0.5"/><path d="M7 7.5l1 1.2 1.2-1" stroke="#8A8A86" stroke-width="0.8" fill="none"/></svg>
<svg style="left:406px;top:33px" width="11" height="10" viewBox="0 0 11 10"><rect x="0.5" y="0.5" width="9" height="7.5" fill="#C8C8C4" stroke="#A0A09C" stroke-width="0.6"/><rect x="1.6" y="2.4" width="3" height="4.6" fill="#F4F4F2"/><rect x="5.3" y="2.4" width="3.2" height="4.6" fill="#F4F4F2"/><path d="M2.3 4h1.6M2.3 5.5h1.6M6 4h1.8" stroke="#A8A8A4" stroke-width="0.5"/><path d="M5.5 8.5L9.5 3.5" stroke="#8A8A86" stroke-width="0.9"/></svg>
<svg style="left:421px;top:33px" width="11" height="10" viewBox="0 0 11 10"><rect x="0.5" y="0.5" width="9" height="7.5" fill="#C8C8C4" stroke="#A0A09C" stroke-width="0.6"/><rect x="1.6" y="2.4" width="3" height="4.6" fill="#F4F4F2"/><rect x="5.3" y="2.4" width="3.2" height="4.6" fill="#F4F4F2"/><path d="M2.3 4h1.6M2.3 5.5h1.6M6 4h1.8" stroke="#A8A8A4" stroke-width="0.5"/><path d="M6.5 7l2.5 2M9 7l-2.5 2" stroke="#8A8A86" stroke-width="0.7"/></svg>
<svg style="left:437px;top:33px" width="9" height="9" viewBox="0 0 9 9"><path d="M3 0.8h3l0.5 3H2.5z" fill="#E4E4E0" stroke="#A8A8A4" stroke-width="0.5"/><path d="M0.5 4h8v3.5h-8z" fill="#F0F0EC" stroke="#A8A8A4" stroke-width="0.5"/><rect x="1.5" y="7.5" width="6" height="1" fill="#B8B8B4"/></svg>
<svg style="left:451px;top:32px" width="11" height="10" viewBox="0 0 11 10"><rect x="0.5" y="0.5" width="4.5" height="8.5" rx="1" fill="#E6E6E2" stroke="#A8A8A4" stroke-width="0.5"/><rect x="3.5" y="2.5" width="5.5" height="6.5" fill="#EEEEEA" stroke="#A8A8A4" stroke-width="0.5"/><path d="M6 6l2 2" stroke="#9A9A96" stroke-width="0.8"/></svg>
<div class="a" style="left:757px;top:1px;width:13px;height:13px;background:radial-gradient(circle at 30% 30%,#5A9BFF,#2363E8 60%,#1D50D0);border:1px solid #D0E0FC;border-radius:2px;box-shadow:inset 0 0 0 0.5px rgba(0,0,0,0.15)"></div>
<div class="a" style="left:771px;top:1px;width:13px;height:13px;background:radial-gradient(circle at 30% 30%,#5A9BFF,#2363E8 60%,#1D50D0);border:1px solid #D0E0FC;border-radius:2px;box-shadow:inset 0 0 0 0.5px rgba(0,0,0,0.15)"></div>
<div class="a" style="left:785.5px;top:1px;width:13px;height:13px;background:radial-gradient(circle at 30% 30%,#F0906A,#DE5A30 60%,#C84820);border:1px solid #D0E0FC;border-radius:2px;box-shadow:inset 0 0 0 0.5px rgba(0,0,0,0.15)"></div>
<div class="a" style="left:760.5px;top:9px;width:4px;height:2px;background:#fff"></div>
<div class="a" style="left:775px;top:5.5px;width:5px;height:4px;border:1px solid #fff;border-top-width:1.5px"></div>
<div class="a" style="left:777px;top:3.5px;width:5px;height:4px;border:1px solid #fff;border-top-width:1.5px;border-left:none;border-bottom:none"></div>
<svg style="left:785.5px;top:1px" width="13" height="13" viewBox="0 0 13 13"><path d="M3.8 3.8L9.2 9.2M9.2 3.8L3.8 9.2" stroke="#fff" stroke-width="1.4"/></svg>
<svg style="left:1.5px;top:2.5px" width="11" height="10" viewBox="0 0 11 10"><circle cx="6.5" cy="5.2" r="4" fill="#F6F6FC"/><rect x="0.8" y="0.8" width="3.2" height="3.4" fill="#E8EEFA" stroke="#B8C8F0" stroke-width="0.4"/><circle cx="5.2" cy="5.2" r="0.9" fill="#6A6070"/><ellipse cx="5.6" cy="7.8" rx="2.6" ry="1.4" fill="#E06080" opacity="0.75"/></svg>
<svg style="left:379.2px;top:94.2px" width="10" height="10" viewBox="0 0 10 10"><defs><radialGradient id="og0" cx="0.48" cy="0.5" r="0.5"><stop offset="0" stop-color="#FFFFFF"/><stop offset="0.25" stop-color="#FFE8C8"/><stop offset="0.45" stop-color="#F09A40"/><stop offset="0.8" stop-color="#E07418"/><stop offset="1" stop-color="#C86010"/></radialGradient></defs><circle cx="5" cy="4.8" r="4.9" fill="url(#og0)"/></svg>
<svg style="left:448.5px;top:94.2px" width="9" height="10" viewBox="0 0 9 10"><defs><linearGradient id="dg0" x1="0" y1="0" x2="1" y2="1"><stop offset="0" stop-color="#FFFFFF"/><stop offset="1" stop-color="#B8D4F0"/></linearGradient></defs><path d="M0.5 0.5h5l2.5 2.5v6.5h-7.5z" fill="url(#dg0)" stroke="#8EA8C8" stroke-width="0.6"/><path d="M5.5 0.5v2.5h2.5" fill="#fff" stroke="#8EA8C8" stroke-width="0.5"/></svg>
<svg style="left:379.2px;top:107.2px" width="10" height="10" viewBox="0 0 10 10"><defs><radialGradient id="og1" cx="0.48" cy="0.5" r="0.5"><stop offset="0" stop-color="#FFFFFF"/><stop offset="0.25" stop-color="#FFE8C8"/><stop offset="0.45" stop-color="#F09A40"/><stop offset="0.8" stop-color="#E07418"/><stop offset="1" stop-color="#C86010"/></radialGradient></defs><circle cx="5" cy="4.8" r="4.9" fill="url(#og1)"/></svg>
<svg style="left:448.5px;top:107.2px" width="9" height="10" viewBox="0 0 9 10"><defs><linearGradient id="dg1" x1="0" y1="0" x2="1" y2="1"><stop offset="0" stop-color="#FFFFFF"/><stop offset="1" stop-color="#B8D4F0"/></linearGradient></defs><path d="M0.5 0.5h5l2.5 2.5v6.5h-7.5z" fill="url(#dg1)" stroke="#8EA8C8" stroke-width="0.6"/><path d="M5.5 0.5v2.5h2.5" fill="#fff" stroke="#8EA8C8" stroke-width="0.5"/></svg>
<svg style="left:379.2px;top:120.2px" width="10" height="10" viewBox="0 0 10 10"><defs><radialGradient id="og2" cx="0.48" cy="0.5" r="0.5"><stop offset="0" stop-color="#FFFFFF"/><stop offset="0.25" stop-color="#FFE8C8"/><stop offset="0.45" stop-color="#F09A40"/><stop offset="0.8" stop-color="#E07418"/><stop offset="1" stop-color="#C86010"/></radialGradient></defs><circle cx="5" cy="4.8" r="4.9" fill="url(#og2)"/></svg>
<svg style="left:448.5px;top:120.2px" width="9" height="10" viewBox="0 0 9 10"><defs><linearGradient id="dg2" x1="0" y1="0" x2="1" y2="1"><stop offset="0" stop-color="#FFFFFF"/><stop offset="1" stop-color="#B8D4F0"/></linearGradient></defs><path d="M0.5 0.5h5l2.5 2.5v6.5h-7.5z" fill="url(#dg2)" stroke="#8EA8C8" stroke-width="0.6"/><path d="M5.5 0.5v2.5h2.5" fill="#fff" stroke="#8EA8C8" stroke-width="0.5"/></svg>
<svg style="left:379.2px;top:133.2px" width="10" height="10" viewBox="0 0 10 10"><defs><radialGradient id="og3" cx="0.48" cy="0.5" r="0.5"><stop offset="0" stop-color="#FFFFFF"/><stop offset="0.25" stop-color="#FFE8C8"/><stop offset="0.45" stop-color="#F09A40"/><stop offset="0.8" stop-color="#E07418"/><stop offset="1" stop-color="#C86010"/></radialGradient></defs><circle cx="5" cy="4.8" r="4.9" fill="url(#og3)"/></svg>
<svg style="left:448.5px;top:133.2px" width="9" height="10" viewBox="0 0 9 10"><defs><linearGradient id="dg3" x1="0" y1="0" x2="1" y2="1"><stop offset="0" stop-color="#FFFFFF"/><stop offset="1" stop-color="#B8D4F0"/></linearGradient></defs><path d="M0.5 0.5h5l2.5 2.5v6.5h-7.5z" fill="url(#dg3)" stroke="#8EA8C8" stroke-width="0.6"/><path d="M5.5 0.5v2.5h2.5" fill="#fff" stroke="#8EA8C8" stroke-width="0.5"/></svg>
<svg style="left:379.2px;top:146.2px" width="10" height="10" viewBox="0 0 10 10"><defs><radialGradient id="og4" cx="0.48" cy="0.5" r="0.5"><stop offset="0" stop-color="#FFFFFF"/><stop offset="0.25" stop-color="#FFE8C8"/><stop offset="0.45" stop-color="#F09A40"/><stop offset="0.8" stop-color="#E07418"/><stop offset="1" stop-color="#C86010"/></radialGradient></defs><circle cx="5" cy="4.8" r="4.9" fill="url(#og4)"/></svg>
<svg style="left:448.5px;top:146.2px" width="9" height="10" viewBox="0 0 9 10"><defs><linearGradient id="dg4" x1="0" y1="0" x2="1" y2="1"><stop offset="0" stop-color="#FFFFFF"/><stop offset="1" stop-color="#B8D4F0"/></linearGradient></defs><path d="M0.5 0.5h5l2.5 2.5v6.5h-7.5z" fill="url(#dg4)" stroke="#8EA8C8" stroke-width="0.6"/><path d="M5.5 0.5v2.5h2.5" fill="#fff" stroke="#8EA8C8" stroke-width="0.5"/></svg>
<svg style="left:379.2px;top:159.2px" width="10" height="10" viewBox="0 0 10 10"><defs><radialGradient id="og5" cx="0.48" cy="0.5" r="0.5"><stop offset="0" stop-color="#FFFFFF"/><stop offset="0.25" stop-color="#FFE8C8"/><stop offset="0.45" stop-color="#F09A40"/><stop offset="0.8" stop-color="#E07418"/><stop offset="1" stop-color="#C86010"/></radialGradient></defs><circle cx="5" cy="4.8" r="4.9" fill="url(#og5)"/></svg>
<svg style="left:448.5px;top:159.2px" width="9" height="10" viewBox="0 0 9 10"><defs><linearGradient id="dg5" x1="0" y1="0" x2="1" y2="1"><stop offset="0" stop-color="#FFFFFF"/><stop offset="1" stop-color="#B8D4F0"/></linearGradient></defs><path d="M0.5 0.5h5l2.5 2.5v6.5h-7.5z" fill="url(#dg5)" stroke="#8EA8C8" stroke-width="0.6"/><path d="M5.5 0.5v2.5h2.5" fill="#fff" stroke="#8EA8C8" stroke-width="0.5"/></svg>
<div class="a" style="left:435px;top:84px;width:8.3px;height:7.2px;background:linear-gradient(#DCE6FA,#BACDF4);border-radius:1px"></div>
<svg style="left:435px;top:84px" width="9" height="8" viewBox="0 0 9 8"><path d="M1.8 2.6L4.15 4.8 6.5 2.6" stroke="#30489A" stroke-width="1.1" fill="none"/></svg>
<div class="a" style="left:502px;top:84px;width:8.3px;height:7.2px;background:linear-gradient(#DCE6FA,#BACDF4);border-radius:1px"></div>
<svg style="left:502px;top:84px" width="9" height="8" viewBox="0 0 9 8"><path d="M1.8 2.6L4.15 4.8 6.5 2.6" stroke="#30489A" stroke-width="1.1" fill="none"/></svg>
<svg style="left:427.5px;top:84.5px" width="6" height="6" viewBox="0 0 6 6"><path d="M3 0.8L5.5 5H0.5Z" fill="none" stroke="#B8B6A8" stroke-width="0.8"/></svg>
<svg style="left:576.5px;top:83.2px" width="10" height="10" viewBox="0 0 10 10"><path d="M5 0.2L9.8 4.8 5 9.4 0.2 4.8Z" fill="#D0DEF8"/><path d="M5 1.6L8.4 4.8 5 8 1.6 4.8Z" fill="#2848B0"/><rect x="4.5" y="3" width="1" height="3.8" fill="#C8D8F8"/></svg>
<svg style="left:170px;top:167px" width="11" height="10" viewBox="0 0 11 10"><rect x="0.5" y="0.5" width="5.5" height="4" fill="#F3E07A" stroke="#C8B450" stroke-width="0.5"/><rect x="1.5" y="4" width="6" height="5.5" fill="#F4F6FA" stroke="#9AA8C0" stroke-width="0.5"/><circle cx="7.5" cy="7" r="2.5" fill="none" stroke="#E05050" stroke-width="0.9"/></svg>
<svg style="left:170px;top:178.5px" width="10" height="10" viewBox="0 0 10 10"><rect x="0.5" y="1" width="8" height="8.5" fill="#E8EEF8" stroke="#9AA8C8" stroke-width="0.6"/><path d="M2 8.5L8 2" stroke="#6A6AB8" stroke-width="1.8"/><circle cx="8.5" cy="1.5" r="1.2" fill="#E86A3A"/></svg>
<svg style="left:170px;top:190px" width="10" height="10" viewBox="0 0 10 10"><path d="M3 9.5q-2.5-4 0-5h5q2 1 0 5z" fill="#9CCAF0" stroke="#6AA0D8" stroke-width="0.5"/><path d="M4 1l3 1.5-2 2.5" stroke="#38A048" stroke-width="1.4" fill="none"/><circle cx="1.8" cy="2" r="1.5" fill="#8AA0C8"/></svg>
<svg style="left:171px;top:219.5px" width="10" height="9" viewBox="0 0 10 9"><rect x="0.5" y="0.5" width="5" height="6.5" fill="#F4F6FA" stroke="#9AA8C0" stroke-width="0.5"/><rect x="3.5" y="2.5" width="5.5" height="6" fill="#DCE6F4" stroke="#7A90B8" stroke-width="0.5"/></svg>
<svg style="left:171px;top:231px" width="10" height="9" viewBox="0 0 10 9"><rect x="0.5" y="0.5" width="5" height="7.5" fill="#EEEEEA" stroke="#C8C8C4" stroke-width="0.5"/><rect x="3.5" y="2.5" width="5.5" height="6" fill="#F4F4F0" stroke="#C8C8C4" stroke-width="0.5"/></svg>
<div class="a" style="left:170.5px;top:247px;width:8.5px;height:8.5px;background:linear-gradient(#E4E4E0,#C8C8C2);border-radius:1.5px"></div>
<svg style="left:170.5px;top:247px" width="9" height="9" viewBox="0 0 9 9"><path d="M2 5.3L4.25 3.2 6.5 5.3" stroke="#fff" stroke-width="1.2" fill="none"/></svg>
<div class="a" style="left:170.5px;top:259px;width:8.5px;height:8.5px;background:linear-gradient(#E4E4E0,#C8C8C2);border-radius:1.5px"></div>
<svg style="left:170.5px;top:259px" width="9" height="9" viewBox="0 0 9 9"><path d="M2 3.2L4.25 5.3 6.5 3.2" stroke="#fff" stroke-width="1.2" fill="none"/></svg>
<div class="a" style="left:170.5px;top:275.5px;width:8.5px;height:8.5px;background:linear-gradient(#6AA4F0,#3878D8);border-radius:1.5px"></div>
<svg style="left:170.5px;top:275.5px" width="9" height="9" viewBox="0 0 9 9"><path d="M2.2 4.5L4.25 2.5 6.3 4.5M2.2 7L4.25 5 6.3 7" stroke="#fff" stroke-width="0.9" fill="none"/></svg>
<div class="a" style="left:170.5px;top:287px;width:8.5px;height:8.5px;background:linear-gradient(#6AA4F0,#3878D8);border-radius:1.5px"></div>
<svg style="left:170.5px;top:287px" width="9" height="9" viewBox="0 0 9 9"><path d="M2.2 2L4.25 4 6.3 2M2.2 4.5L4.25 6.5 6.3 4.5" stroke="#fff" stroke-width="0.9" fill="none"/></svg>
<svg style="left:170px;top:319px" width="11" height="11" viewBox="0 0 11 11"><path d="M1 5.2Q1 0.6 4.6 0.6Q8.2 0.6 8.2 5.2Z" fill="#FAE0B0" stroke="#D8CCB8" stroke-width="0.5"/><rect x="0.5" y="4.6" width="8" height="4.4" fill="#E6EAF4" stroke="#A8B2C4" stroke-width="0.5"/><path d="M7.6 5.6V9.2" stroke="#4A78D8" stroke-width="1.2"/><path d="M5.6 8.4H9.6L7.6 10.6Z" fill="#4A78D8"/></svg></svg>
<svg style="left:170px;top:335px" width="11" height="10" viewBox="0 0 11 10"><path d="M0.5 1.2H4V3.6H0.5M0.5 6.2H4V8.8H0.5" stroke="#7AA0E0" stroke-width="0.9" fill="none"/><circle cx="5" cy="4.9" r="1" fill="#5AB060"/><path d="M6.2 3.6H10.5M6.2 6.2H10.5" stroke="#7AA0E0" stroke-width="0.9"/></svg></svg>
<svg style="left:611px;top:463px" width="8" height="8" viewBox="0 0 8 8"><path d="M1.5 0.5h5M2.5 0.5v3.5M5.5 0.5v3.5M0.5 4h7M4 4v3.5" stroke="#2C4FA8" stroke-width="1.1" fill="none"/></svg>
<div class="a" style="left:621px;top:463px;width:7.5px;height:7.5px;background:linear-gradient(#F07C50,#D4481E);border-radius:1px"></div>
<svg style="left:621px;top:463px" width="8" height="8" viewBox="0 0 8 8"><path d="M2 2L5.7 5.7M5.7 2L2 5.7" stroke="#fff" stroke-width="1.3"/></svg>
</body></html>
